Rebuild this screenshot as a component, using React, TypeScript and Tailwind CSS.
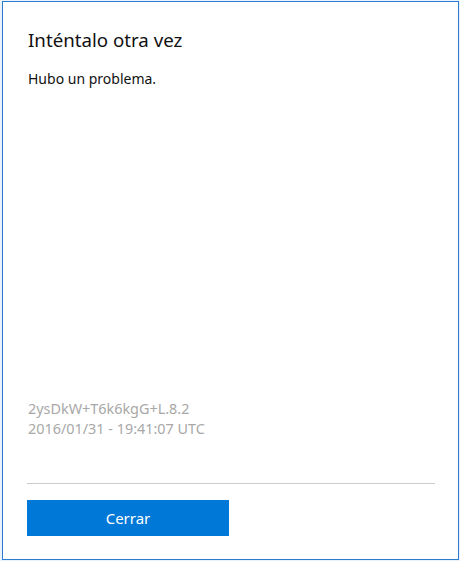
export default function App() {
  return (
    <div className="w-[460px] h-[561px] bg-[#eaf2fb] pt-[1px] pl-[2px]" style={{ fontFamily: '"Noto Sans", "Open Sans", sans-serif' }}>
      <div className="w-[457px] h-[559px] bg-white border border-[#2b7bd0] flex flex-col px-[24px]">
        <h1 className="mt-[24px] pl-px text-[18.7px] leading-[27px] text-[#111] font-normal">Inténtalo otra vez</h1>
        <p className="mt-[16px] pl-px text-[14px] leading-[20px] text-[#111]">Hubo un problema.</p>

        <div className="mt-auto pl-px text-[14.4px] leading-[20px] text-[#a8a8a8]">
          <div>2ysDkW+T6k6kgG+L.8.2</div>
          <div>2016/01/31 - 19:41:07 UTC</div>
        </div>

        <div className="mt-[44px] h-px bg-[#cccccc] mr-[-1px]" />

        <button className="mt-[16px] mb-[23px] w-[202px] h-[36px] bg-[#0078d7] text-white text-[15px]">
          Cerrar
        </button>
      </div>
    </div>
  )
}
